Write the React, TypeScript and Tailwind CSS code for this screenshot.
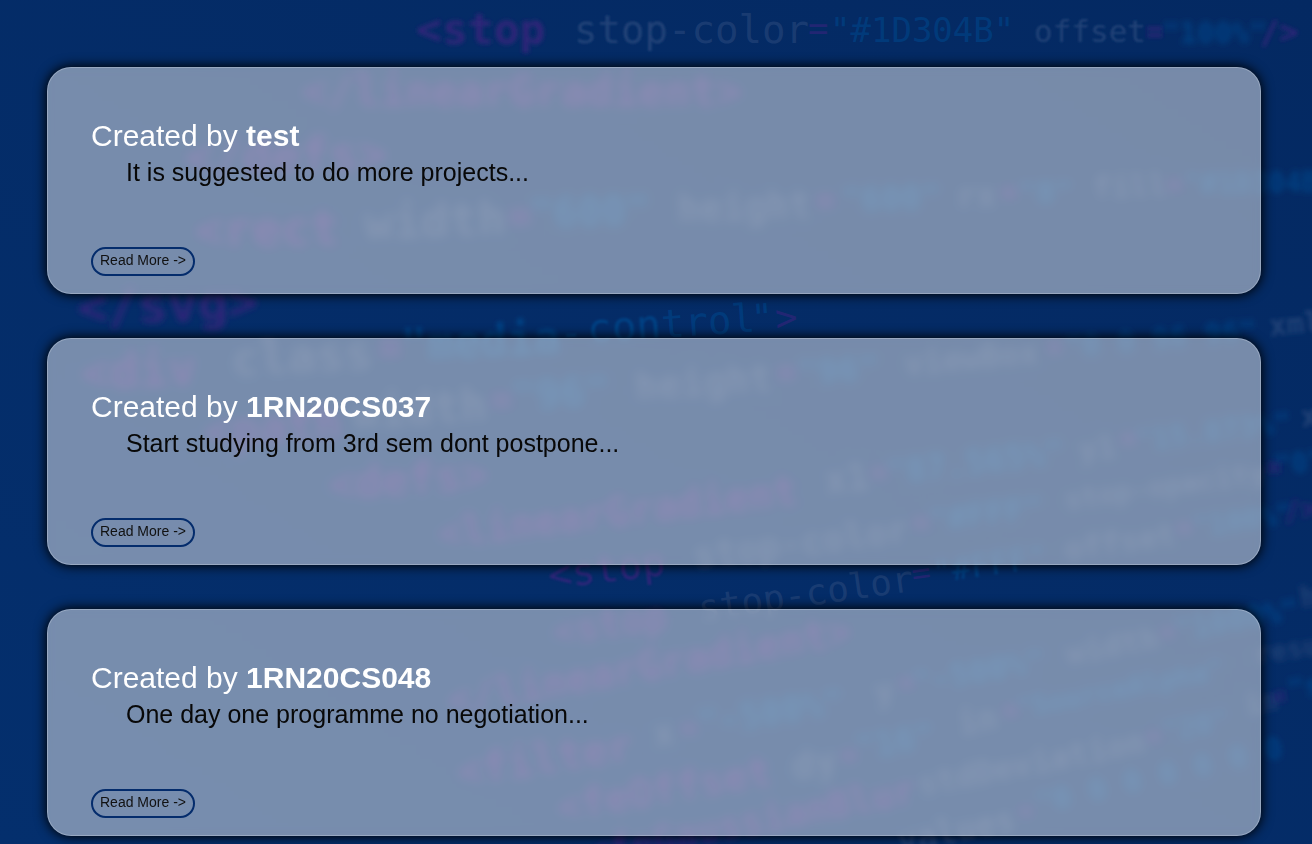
type Tone = "tag" | "attr" | "value";

interface Token {
  text: string;
  x: number;
  y: number;
  size: number;
  tilt?: number;
  tone: Tone;
  soft: number;
}

interface Post {
  author: string;
  excerpt: string;
}

const tones: Record<Tone, string> = {
  tag: "#35247c",
  attr: "#27467a",
  value: "#004488",
};

const t = (
  tone: Tone,
  text: string,
  x: number,
  y: number,
  size: number,
  tilt = 0,
  soft = 3,
): Token => ({ tone, text, x, y, size, tilt, soft });

const code: Token[] = [
  t("tag", "<stop", 416, 44, 43, 0, 2),
  t("attr", "stop", 574, 43, 39, 0, 1),
  t("attr", "-color", 668, 43, 39, 0, 0),
  t("tag", "=", 808, 40, 34, 0, 0),
  t("value", '"#1D304B"', 830, 42, 34, 0, 0),
  t("attr", "offset", 1034, 42, 31, 0, 1),
  t("tag", "=", 1146, 41, 29, 0, 2),
  t("value", '"100%"', 1162, 43, 29, 0, 3),
  t("tag", "/>", 1260, 43, 32, 0, 2),

  t("tag", "</linearGradient>", 302, 106, 43),
  t("tag", "</defs>", 185, 174, 48, -1),

  t("tag", "<rect", 195, 247, 48, -1),
  t("attr", "width", 365, 239, 47, -2),
  t("tag", "=", 508, 230, 40),
  t("value", '"600"', 530, 228, 40, -2),
  t("attr", "height", 678, 222, 37, -2),
  t("tag", "=", 815, 212, 34),
  t("value", '"600"', 842, 212, 33, -2),
  t("attr", "rx", 957, 208, 33, -2),
  t("tag", "=", 1000, 202, 30),
  t("value", '"8"', 1018, 204, 31, -2),
  t("attr", "fill", 1093, 198, 31, -2),
  t("tag", "=", 1166, 194, 28),
  t("value", '"#1D304B', 1184, 194, 28, -1),

  t("tag", "</svg>", 78, 325, 50, -2, 3),
  t("tag", "<div", 82, 390, 48, -3),
  t("attr", "class", 232, 376, 47, -3),
  t("tag", "=", 378, 362, 40),
  t("value", '"media', 402, 361, 44, -3, 2),
  t("value", "-", 560, 348, 40, -4, 1),
  t("value", "con", 588, 343, 41, -4, 1),
  t("value", "trol", 662, 338, 39, -4, 0),
  t("value", '"', 752, 331, 37, -4, 0),
  t("tag", ">", 776, 331, 37, -4, 0),

  t("tag", "<path", 205, 448, 46, -4),
  t("attr", "width", 353, 429, 45, -4),
  t("tag", "=", 490, 412, 38),
  t("value", '"96"', 512, 411, 41, -4),
  t("attr", "height", 636, 400, 38, -4),
  t("tag", "=", 776, 384, 34),
  t("value", '"96"', 798, 385, 34, -4),
  t("attr", "viewBox", 905, 375, 32, -5),
  t("tag", "=", 1046, 357, 28),
  t("value", '"0 0 96 96"', 1066, 357, 29, -5, 3),
  t("attr", "xml", 1270, 336, 29, -5, 2),

  t("tag", "<defs>", 330, 500, 44, -4),
  t("tag", "<linearGradient", 440, 548, 40, -7),
  t("attr", "x1", 826, 494, 37, -7),
  t("tag", "=", 870, 482, 30),
  t("value", '"87.565%"', 888, 485, 33, -7),
  t("attr", "y1", 1080, 461, 31, -7),
  t("tag", "=", 1120, 448, 28),
  t("value", '"15.873%"', 1136, 451, 29, -7),
  t("attr", "x2", 1302, 427, 28, -7, 2),

  t("tag", "<stop", 550, 589, 39, -7, 1),
  t("attr", "stop-color", 695, 568, 36, -7),
  t("tag", "=", 912, 532, 30),
  t("value", '"#FFF"', 930, 532, 32, -7),
  t("attr", "stop-opacity", 1066, 510, 28, -8),
  t("tag", "=", 1266, 476, 26),
  t("value", '"0"', 1276, 476, 28, -8),

  t("tag", "<stop", 555, 645, 38, -8),
  t("attr", "stop-color", 700, 621, 36, -8, 0),
  t("tag", "=", 913, 585, 32, -8, 0),
  t("value", '"#FFF"', 934, 583, 32, -8, 1),
  t("attr", "offset", 1066, 560, 31, -8),
  t("tag", "=", 1176, 537, 28),
  t("value", '"100%"', 1194, 537, 28, -8),
  t("tag", "/>", 1285, 522, 28, -8, 3),

  t("tag", "</linearGradient>", 450, 715, 40, -10),
  t("tag", "<filter", 460, 787, 42, -9),
  t("attr", "x", 655, 747, 36, -9),
  t("tag", "=", 680, 738, 30),
  t("value", '"-500%"', 700, 736, 35, -9),
  t("attr", "y", 876, 704, 33, -9),
  t("tag", "=", 898, 692, 28),
  t("value", '"-500%"', 914, 694, 32, -10),
  t("attr", "width", 1068, 664, 31, -10),
  t("tag", "=", 1160, 641, 26),
  t("value", '"1000%"', 1176, 641, 30, -10),
  t("attr", "he", 1302, 608, 28, -10, 3),

  t("tag", "<feOffset", 560, 822, 40, -10),
  t("attr", "dy", 794, 780, 38, -10),
  t("tag", "=", 840, 765, 30),
  t("value", '"16"', 858, 760, 33, -10),
  t("attr", "in", 960, 735, 33, -10),
  t("tag", "=", 1002, 720, 28),
  t("value", '"SourceAlpha"', 1018, 718, 27, -11),
  t("attr", "resu", 1256, 664, 27, -9, 3),

  t("tag", "<feGaussianBlur", 590, 866, 37, -11),
  t("attr", "stdDeviation", 920, 796, 32, -11),
  t("tag", "=", 1146, 745, 26),
  t("value", '"20"', 1164, 742, 28, -11),
  t("attr", "in", 1246, 715, 28, -10),
  t("tag", "=", 1274, 706, 24, -10, 3),
  t("value", '"sh', 1290, 700, 28, -11, 3),

  t("attr", "values", 900, 853, 33, -11, 2),
  t("tag", "=", 1018, 820, 26),
  t("value", '"0 0 0 0 0 0 0', 1038, 814, 30, -13),
];

const posts: Post[] = [
  { author: "test", excerpt: "It is suggested to do more projects..." },
  { author: "1RN20CS037", excerpt: "Start studying from 3rd sem dont postpone..." },
  { author: "1RN20CS048", excerpt: "One day one programme no negotiation..." },
];

function CodeBackdrop() {
  return (
    <svg
      aria-hidden="true"
      viewBox="0 0 1312 844"
      preserveAspectRatio="xMidYMin slice"
      className="pointer-events-none absolute inset-0 h-full w-full select-none font-['DejaVu_Sans_Mono',monospace]"
    >
      <defs>
        <filter id="soft-1" x="-20%" y="-20%" width="140%" height="140%">
          <feGaussianBlur stdDeviation="1" />
        </filter>
        <filter id="soft-2" x="-20%" y="-20%" width="140%" height="140%">
          <feGaussianBlur stdDeviation="2" />
        </filter>
        <filter id="soft-3" x="-20%" y="-20%" width="140%" height="140%">
          <feGaussianBlur stdDeviation="3" />
        </filter>
      </defs>
      {code.map((token) => (
        <text
          key={`${token.text}-${token.x}-${token.y}`}
          x={token.x}
          y={token.y}
          fontSize={token.size}
          fontWeight={token.soft > 1 ? 700 : 400}
          fill={tones[token.tone]}
          fillOpacity={token.soft ? 0.85 : 0.65}
          transform={`rotate(${token.tilt} ${token.x} ${token.y})`}
          filter={token.soft ? `url(#soft-${token.soft})` : undefined}
        >
          {token.text}
        </text>
      ))}
    </svg>
  );
}

function PostCard({ author, excerpt }: Post) {
  return (
    <article className="flex flex-col items-start rounded-3xl border border-white/25 bg-[#eaebf0]/50 px-[43px] pt-[50px] pb-[17px] shadow-[0_0_12px_1px_#000] backdrop-blur-[4px]">
      <h2 className="text-[30px] leading-9 text-white">
        Created by <strong className="font-bold">{author}</strong>
      </h2>
      <p className="pl-[35px] text-[25px] leading-9 text-[#080808]">{excerpt}</p>
      <button
        type="button"
        className="mt-[57px] h-[29px] rounded-full border-2 border-[#042c6c] px-[7px] pb-1 text-sm leading-5 text-[#111]"
      >
        Read More -&gt;
      </button>
    </article>
  );
}

export default function App() {
  return (
    <div className="relative min-h-screen overflow-hidden bg-linear-to-tr from-[#042f6d] to-[#042962] font-['Liberation_Sans',Arial,sans-serif]">
      <CodeBackdrop />
      <main className="relative flex flex-col gap-11 pt-[67px] pr-[51px] pb-2 pl-[47px]">
        {posts.map((post) => (
          <PostCard key={post.author} {...post} />
        ))}
      </main>
    </div>
  );
}
